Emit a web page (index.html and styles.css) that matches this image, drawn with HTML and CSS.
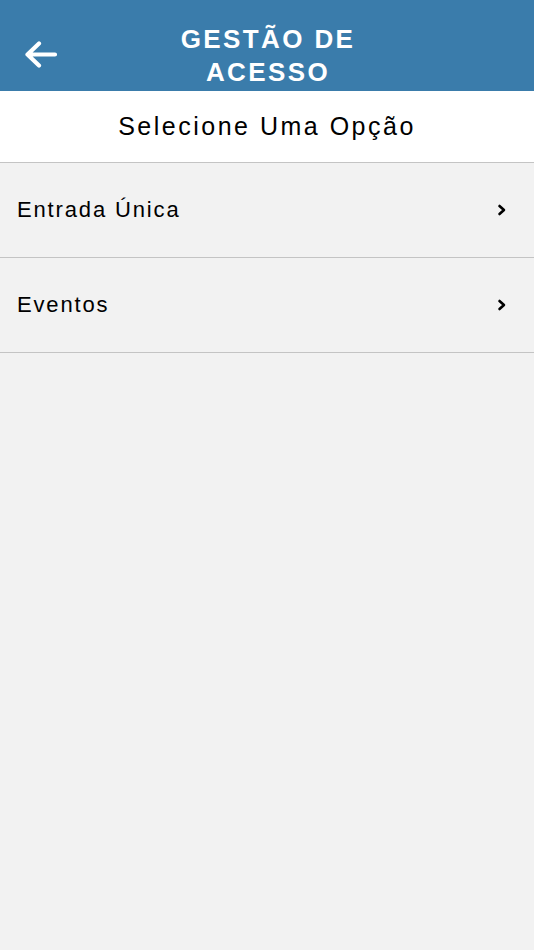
FILE: index.html
```html
<!DOCTYPE html>
<html lang="pt">
<head>
<meta charset="utf-8">
<link rel="stylesheet" href="styles.css">
</head>
<body>
<header class="topbar">
  <button class="back" aria-label="Voltar">
    <svg width="36" height="28" viewBox="0 0 36 28"><path d="M32 13.5H4.5M16 2.5L4.5 13.5L16 24.5" fill="none" stroke="#fff" stroke-width="4.2" stroke-linecap="round" stroke-linejoin="round"/></svg>
  </button>
  <h1 class="title">GESTÃO DE<br>ACESSO</h1>
</header>
<div class="subheader">Selecione Uma Opção</div>
<ul class="list">
  <li class="row"><span>Entrada Única</span><svg class="chev" width="10" height="12" viewBox="0 0 10 12"><path d="M2.5 2l4.5 4-4.5 4" fill="none" stroke="#000" stroke-width="2.6" stroke-linecap="round" stroke-linejoin="round"/></svg></li>
  <li class="row"><span>Eventos</span><svg class="chev" width="10" height="12" viewBox="0 0 10 12"><path d="M2.5 2l4.5 4-4.5 4" fill="none" stroke="#000" stroke-width="2.6" stroke-linecap="round" stroke-linejoin="round"/></svg></li>
</ul>
</body>
</html>
```
FILE: styles.css
```css
* { box-sizing: border-box; }
html, body { margin: 0; padding: 0; }
body {
  background: #f2f2f2;
  font-family: "Liberation Sans", Arial, sans-serif;
  width: 534px;
  min-height: 950px;
}
.topbar {
  height: 91px;
  background: #3a7cab;
  display: flex;
  align-items: center;
  justify-content: center;
  position: relative;
}
.back {
  position: absolute;
  left: 23px;
  top: 41px;
  background: none;
  border: 0;
  padding: 0;
  display: flex;
}
.title {
  margin: 0;
  color: #fff;
  font-size: 26px;
  font-weight: bold;
  letter-spacing: 2.4px;
  line-height: 33px;
  text-align: center;
  padding-top: 21px;
  padding-left: 2px;
}
.subheader {
  height: 72px;
  background: #fff;
  display: flex;
  align-items: center;
  justify-content: center;
  font-size: 25px;
  letter-spacing: 2.5px;
  color: #000;
  border-bottom: 1px solid #c4c4c4;
  padding-bottom: 1px;
}
.list { list-style: none; margin: 0; padding: 0; }
.row {
  height: 95px;
  display: flex;
  align-items: center;
  justify-content: space-between;
  padding: 0 27px 0 17px;
  font-size: 22px;
  letter-spacing: 1.85px;
  color: #000;
  border-bottom: 1px solid #c4c4c4;
}
.chev { display: block; }
```
